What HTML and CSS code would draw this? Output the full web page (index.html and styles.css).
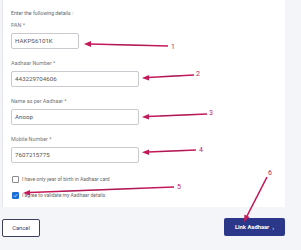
FILE: index.html
```html
<!DOCTYPE html>
<html>
<head>
<meta charset="utf-8">
<link rel="stylesheet" href="styles.css">
</head>
<body>
<div class="page">
  <div class="card">
    <div class="intro">Enter the following details :</div>
    <div class="field">
      <div class="label">PAN *</div>
      <div class="input short">HAKPS6101K</div>
    </div>
    <div class="field">
      <div class="label">Aadhaar Number *</div>
      <div class="input">443229704606</div>
    </div>
    <div class="field">
      <div class="label">Name as per Aadhaar *</div>
      <div class="input">Anoop</div>
    </div>
    <div class="field">
      <div class="label">Mobile Number *</div>
      <div class="input">7607215775</div>
    </div>
    <div class="checks">
      <div class="check"><span class="box"></span><span>I have only year of birth in Aadhaar card</span></div>
      <div class="check"><span class="box on"><svg viewBox="0 0 8 8" width="7" height="7"><path d="M1.5 4.2 L3.3 6 L6.6 2" fill="none" stroke="#fff" stroke-width="1.1"/></svg></span><span>I agree to validate my Aadhaar details</span></div>
    </div>
  </div>
  <div class="actions">
    <div class="btn cancel">Cancel</div>
    <div class="btn primary">Link Aadhaar <span class="chev">›</span></div>
  </div>
  <svg class="notes" width="301" height="250" viewBox="0 0 301 250">
    <g stroke="#c41859" stroke-width="1.6" fill="none">
      <line x1="90" y1="44" x2="168" y2="46"/>
      <line x1="148" y1="77.5" x2="194" y2="75"/>
      <line x1="148" y1="116.5" x2="207" y2="114"/>
      <line x1="148" y1="152" x2="196" y2="150"/>
      <line x1="30" y1="192.5" x2="174" y2="187"/>
      <line x1="267" y1="177" x2="247" y2="216"/>
    </g>
    <g stroke="#7a1f4a" stroke-width="0.6" fill="none" opacity="0.6">
      <line x1="110" y1="44.5" x2="150" y2="45.5"/>
      <line x1="160" y1="76.6" x2="182" y2="75.5"/>
      <line x1="160" y1="115.9" x2="195" y2="114.5"/>
      <line x1="160" y1="151.5" x2="185" y2="150.5"/>
      <line x1="60" y1="191.4" x2="140" y2="188.3"/>
    </g>
    <g fill="#c41859">
      <polygon points="84,44 91,41 91,47"/>
      <polygon points="142,78 149,75 149,80.5"/>
      <polygon points="142,117 149,114 149,119.5"/>
      <polygon points="142,152.3 149,149.5 149,155"/>
      <polygon points="23,193 30,190 30,195.5"/>
      <polygon points="244,222 244.5,214.5 249.5,217"/>
    </g>
    <g fill="#c41859" font-family="Roboto, 'DejaVu Sans', sans-serif" font-size="7">
      <text x="171" y="49">1</text>
      <text x="196" y="76">2</text>
      <text x="209" y="115">3</text>
      <text x="199" y="152">4</text>
      <text x="177" y="189">5</text>
      <text x="268" y="175">6</text>
    </g>
  </svg>
</div>
</body>
</html>
```

FILE: styles.css
```css
html, body {
  margin: 0;
  padding: 0;
}
body {
  background: #f4f5f9;
  font-family: Roboto, "Liberation Sans", sans-serif;
  width: 301px;
  height: 250px;
  overflow: hidden;
}
.page {
  position: relative;
  width: 301px;
  height: 250px;
}
.card {
  margin-left: 2px;
  width: 283px;
  height: 207px;
  box-sizing: border-box;
  background: #fff;
  border-left: 1px solid #e4e5ec;
  padding: 8px 0 0 8px;
  display: flex;
  flex-direction: column;
}
.intro {
  font-size: 5.2px;
  line-height: 10px;
  height: 10px;
  color: #666;
  margin-bottom: 2px;
}
.field {
  display: flex;
  flex-direction: column;
  margin-bottom: 9px;
}
.label {
  font-size: 5.4px;
  line-height: 10px;
  height: 10px;
  color: #777;
  margin-bottom: 3px;
}
.input {
  width: 128px;
  height: 16px;
  box-sizing: border-box;
  border: 1px solid #c9c9cf;
  border-radius: 2px;
  font-size: 6.2px;
  line-height: 14px;
  color: #555;
  padding-left: 3px;
}
.input.short {
  width: 68px;
}
.checks {
  margin-top: 2px;
  display: flex;
  flex-direction: column;
  gap: 6px;
}
.check {
  display: flex;
  align-items: center;
  gap: 3px;
  height: 10px;
  font-size: 5px;
  color: #666;
  padding-left: 1px;
}
.box {
  width: 7px;
  height: 7px;
  box-sizing: border-box;
  border: 1px solid #8a8a90;
  border-radius: 1px;
  display: flex;
  align-items: center;
  justify-content: center;
  background: #fff;
}
.box.on {
  background: #1a6fd8;
  border-color: #1a6fd8;
}
.actions {
  display: flex;
  justify-content: space-between;
  align-items: flex-start;
  margin: 11px 16px 0 2px;
}
.btn {
  box-sizing: border-box;
  display: flex;
  align-items: center;
  justify-content: center;
  border-radius: 2px;
  font-size: 5.8px;
}
.cancel {
  width: 38px;
  height: 18px;
  margin-top: 1px;
  border: 1px solid #3a3f5c;
  color: #3a4070;
  background: #fff;
}
.primary {
  width: 61px;
  height: 18px;
  background: #2b3788;
  color: #fff;
  font-weight: bold;
}
.chev {
  font-weight: normal;
  margin-left: 3px;
  font-size: 6px;
}
.notes {
  position: absolute;
  left: 0;
  top: 0;
  pointer-events: none;
}
```
